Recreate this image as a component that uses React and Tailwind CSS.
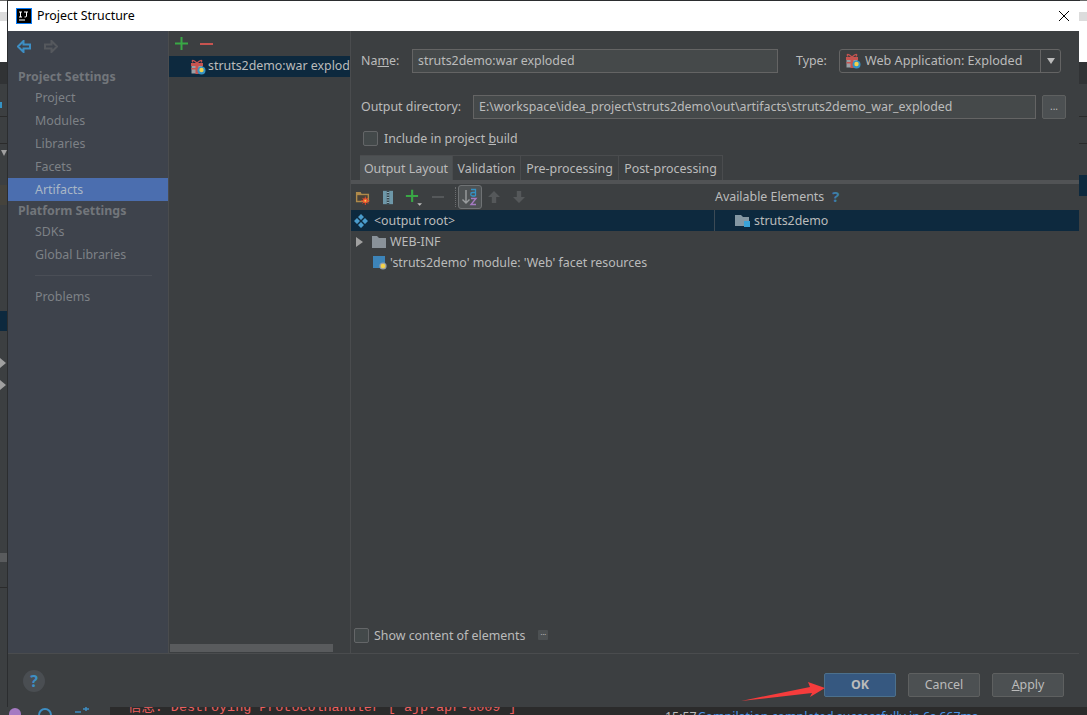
import React from "react"

const ui = { fontFamily: '"Noto Sans", "Open Sans", sans-serif' }

function Gift({ className = "" }) {
  return (
    <svg viewBox="0 0 15 16" className={`w-[15px] h-[16px] shrink-0 ${className}`}>
      <rect x="0.5" y="5" width="11" height="9.5" fill="#9aa0a6" />
      <rect x="0" y="4" width="12" height="3" fill="#c75450" />
      <rect x="4.5" y="4" width="3" height="11" fill="#c75450" />
      <rect x="0.5" y="9" width="11" height="1.5" fill="#c75450" />
      <path d="M6 4 C2 0 0 1 2 3.5 M6 4 C10 0 12 1 10 3.5" stroke="#c75450" strokeWidth="1.2" fill="none" />
      <circle cx="10.5" cy="11.5" r="4" fill="#3592c4" />
      <circle cx="10.5" cy="11" r="2.2" fill="#f4d24b" />
    </svg>
  )
}

function SideHead({ children }) {
  return <div className="h-[19px] pt-[2px] pl-[10px] flex items-center font-bold text-[12.4px] text-[#72767b]">{children}</div>
}

function SideItem({ children, active }) {
  return (
    <div className={`h-[23px] pt-[2px] pl-[27px] flex items-center text-[12.4px] ${active ? "bg-[#4b6eaf] text-[#a9b7c6]" : "text-[#7d8186]"}`}>
      {children}
    </div>
  )
}

function Tab({ children, active, w }) {
  return (
    <div className={`h-[25px] pt-[3px] flex items-center justify-center text-[12.4px] text-[#bbbbbb] border-t border-r border-[#4a4c4e] ${w} ${active ? "bg-[#4e5254]" : ""}`}>
      {children}
    </div>
  )
}

function FootButton({ children, primary }) {
  return (
    <div className={`w-[72px] h-[24px] pt-[2px] flex items-center justify-center text-[12.4px] rounded-[2px] border ${primary ? "bg-[#365880] border-[#4c708c] text-[#bbbbbb] font-bold" : "bg-[#4c5052] border-[#5e6060] text-[#bbbbbb]"}`}>
      {children}
    </div>
  )
}

function Checkbox() {
  return <div className="w-[15px] h-[15px] rounded-[2px] border border-[#646668] bg-[#43494a] shrink-0" />
}

function Toolbar() {
  return (
    <div className="h-[26px] flex items-center pl-[4px] relative">
      {/* new folder */}
      <svg viewBox="0 0 16 16" className="w-[15px] h-[15px]">
        <path d="M1 2h5l1 2h8v9H1z" fill="#b08a4a" />
        <path d="M2.5 5.5h11v6h-11z" fill="#4a4238" />
        <path d="M11 7v9M6.5 11.5h9M8 8.5l6 6M14 8.5l-6 6" stroke="#e8442a" strokeWidth="1" />
        <circle cx="11" cy="11.5" r="2.6" fill="#f0562f" />
        <circle cx="11" cy="11.5" r="1" fill="#f4d24b" />
      </svg>
      {/* archive */}
      <svg viewBox="0 0 12 16" className="w-[10px] h-[15px] ml-[13px]">
        <rect width="12" height="16" fill="#6d97a8" />
        <rect x="4.5" width="3" height="16" fill="#37474f" />
        <path d="M4.5 2h3M4.5 5h3M4.5 8h3M4.5 11h3M4.5 14h3" stroke="#9fc2cf" strokeWidth="1" />
      </svg>
      {/* add */}
      <svg viewBox="0 0 16 16" className="w-[17px] h-[17px] ml-[12px]">
        <path d="M7 1h2.4v5.8H15v2.4H9.4V15H7V9.2H1V6.8h6z" fill="#39a845" transform="scale(.82)" />
        <path d="M11.5 13.5h4.5l-2.2 2.2z" fill="#bbbbbb" />
      </svg>
      <div className="w-[12px] h-[2px] bg-[#55585a] ml-[10px]" />
      <div className="h-[20px] border-l border-dotted border-[#6a6c6e] ml-[11px]" />
      <div className="w-[24px] h-[24px] ml-[2px] rounded-[3px] border border-[#6f7274] bg-[#4e5254] flex items-center justify-center">
        <svg viewBox="0 0 20 20" className="w-[20px] h-[20px]">
          <path d="M6 3v13M2.5 12.5 6 16l3.5-3.5" stroke="#9a9d9f" strokeWidth="1.4" fill="none" />
          <path d="M11 2.5h4.5v6.5M15.5 5.5h-3a1.5 1.5 0 0 0 0 3.5h3" stroke="#3592c4" strokeWidth="1.3" fill="none" />
          <path d="M11 11.5h5L11 17.5h5" stroke="#a57ac2" strokeWidth="1.4" fill="none" />
        </svg>
      </div>
      <svg viewBox="0 0 12 12" className="w-[12px] h-[12px] ml-[6px]">
        <path d="M6 0 12 6H8.2v6H3.8V6H0z" fill="#55585a" />
      </svg>
      <svg viewBox="0 0 12 12" className="w-[12px] h-[12px] ml-[13px]">
        <path d="M6 12 0 6h3.8V0h4.4v6H12z" fill="#55585a" />
      </svg>
      <div className="ml-auto w-[365px] pl-[1px] flex items-center text-[12.4px] text-[#bbbbbb]">
        Available Elements
        <span className="ml-[8px] font-bold text-[15px] leading-none text-[#3d7ea8]">?</span>
      </div>
    </div>
  )
}

export default function App() {
  return (
    <div className="w-[1087px] h-[715px] overflow-hidden relative flex flex-col bg-[#3c3f41]" style={ui}>
      <div className="h-px bg-[#6a6a6a] shrink-0" />
      <div className="flex h-[706px] shrink-0">
        {/* what is behind the dialog, left */}
        <div className="w-[8px] shrink-0 flex flex-col bg-[#3c3f41]">
          <div className="h-[11px] bg-white" />
          <div className="h-[9px] bg-[#dcdcdc]" />
          <div className="h-[41px] bg-white" />
          <div className="h-[22px] bg-[#313335]" />
          <div className="h-[32px] pt-[18px]"><div className="w-[2px] h-[6px] bg-[#3592c4]" /></div>
          <div className="h-[27px] border-t border-[#2b2b2b]" />
          <div className="h-[42px] border-t border-[#2b2b2b] pt-[6px] pl-[1px]">
            <div className="w-0 h-0 border-x-[3px] border-x-transparent border-t-[6px] border-t-[#a0a0a0]" />
          </div>
          <div className="h-[20px] bg-[#45433c]" />
          <div className="h-[106px]" />
          <div className="h-[20px] bg-[#0d293e]" />
          <div className="h-[27px]" />
          <div className="h-0 w-0 border-y-[5px] border-y-transparent border-l-[6px] border-l-[#a0a0a0]" />
          <div className="h-[12px]" />
          <div className="h-0 w-0 border-y-[5px] border-y-transparent border-l-[6px] border-l-[#a0a0a0]" />
          <div className="h-[163px]" />
          <div className="h-[9px] bg-[#595b5d]" />
          <div className="h-[13px]" />
          <div className="h-[10px] flex justify-end"><div className="w-px h-full bg-[#5f9fc9]" /></div>
          <div className="h-[3px] border-b border-[#2b2b2b]" />
        </div>

        {/* dialog */}
        <div className="w-[1071px] shrink-0 flex flex-col bg-[#3c3f41] shadow-[0_0_0_1px_#2b2d2f]">
          <div className="h-[30px] shrink-0 bg-white flex items-center pl-[8px] pr-[10px] text-[12.4px] text-black">
            <svg viewBox="0 0 16 16" className="w-[16px] h-[16px]">
              <rect width="16" height="16" fill="#087cfa" />
              <rect x="1" y="1" width="14" height="14" fill="#000" />
              <rect x="3" y="11.5" width="6" height="1" fill="#fff" />
              <path d="M3 4h3M4.5 4v5M3 9h3M8 4h4M10.5 4v4.5Q10.5 9 8.5 9" stroke="#fff" strokeWidth="1" fill="none" />
            </svg>
            <span className="ml-[5px]">Project Structure</span>
            <svg viewBox="0 0 10 10" className="w-[10px] h-[10px] ml-auto mr-[0px]">
              <path d="M0 0 10 10M10 0 0 10" stroke="#000" strokeWidth="1" />
            </svg>
          </div>

          <div className="flex-1 min-h-0 flex">
            {/* sidebar */}
            <div className="w-[160px] shrink-0 bg-[#3e434c] pt-[5px] border-r-0">
              <div className="h-[20px] pl-[9px] flex items-center gap-[13px]">
                <svg viewBox="0 0 14 13" className="w-[14px] h-[13px]">
                  <path d="M6.5 1 1 6.5 6.5 12V8.6H13V4.4H6.5z" fill="none" stroke="#3d8ec4" strokeWidth="2" />
                </svg>
                <svg viewBox="0 0 14 13" className="w-[14px] h-[13px]">
                  <path d="M7.5 1 13 6.5 7.5 12V8.6H1V4.4h6.5z" fill="none" stroke="#55585d" strokeWidth="2" />
                </svg>
              </div>
              <div className="h-[11px]" />
              <SideHead>Project Settings</SideHead>
              <SideItem>Project</SideItem>
              <SideItem>Modules</SideItem>
              <SideItem>Libraries</SideItem>
              <SideItem>Facets</SideItem>
              <SideItem active>Artifacts</SideItem>
              <SideHead>Platform Settings</SideHead>
              <SideItem>SDKs</SideItem>
              <SideItem>Global Libraries</SideItem>
              <div className="h-[19px] flex items-center pl-[27px] pr-[16px]"><div className="h-px w-full bg-[#4a4e56]" /></div>
              <SideItem>Problems</SideItem>
            </div>

            {/* artifact list */}
            <div className="w-[183px] shrink-0 border-x border-[#4a4c4e] flex flex-col overflow-hidden">
              <div className="h-[25px] shrink-0 flex items-center pl-[6px] gap-[12px]">
                <svg viewBox="0 0 13 13" className="w-[13px] h-[13px]">
                  <path d="M5.5 0h2v5.5H13v2H7.5V13h-2V7.5H0v-2h5.5z" fill="#39a845" />
                </svg>
                <div className="w-[13px] h-[2px] bg-[#c75450]" />
              </div>
              <div className="h-[21px] shrink-0 bg-[#0d293e] flex items-center pl-[22px] text-[12.4px] text-[#bbbbbb] whitespace-nowrap overflow-hidden">
                <Gift />
                <span className="ml-[2px]">struts2demo:war exploded</span>
              </div>
              <div className="flex-1" />
              <div className="h-[8px] w-[163px] ml-[1px] mb-px bg-[#595b5d] shrink-0" />
            </div>

            {/* artifact editor */}
            <div className="flex-1 min-w-0 flex flex-col">
              <div className="h-[64px] shrink-0 flex flex-col pt-[18px] pl-[10px]">
                <div className="flex items-center h-[24px] text-[12.4px] text-[#bbbbbb]">
                  <span className="w-[51px]">Na<span className="underline">m</span>e:</span>
                  <div className="w-[366px] h-[24px] bg-[#45494a] border border-[#646464] pl-[5px] flex items-center">struts2demo:war exploded</div>
                  <span className="ml-[18px] w-[43px]">Type:</span>
                  <div className="w-[222px] h-[24px] bg-[#3c3f41] border border-[#646464] rounded-[3px] flex items-center pl-[6px]">
                    <Gift />
                    <span className="ml-[4px] text-[12.6px]">Web Application: Exploded</span>
                    <div className="ml-auto w-[20px] h-full border-l border-[#646464] flex items-center justify-center">
                      <div className="w-0 h-0 border-x-[4px] border-x-transparent border-t-[6px] border-t-[#bbbbbb]" />
                    </div>
                  </div>
                </div>
              </div>
              <div className="shrink-0 pl-[10px] flex items-center h-[24px] text-[12.4px] text-[#bbbbbb]">
                <span className="w-[112px]">Output directory:</span>
                <div className="w-[563px] h-[24px] bg-[#45494a] border border-[#646464] pl-[5px] flex items-center whitespace-nowrap overflow-hidden">E:\workspace\idea_project\struts2demo\out\artifacts\struts2demo_war_exploded</div>
                <div className="w-[24px] h-[24px] ml-[6px] bg-[#4c5052] border border-[#5e6060] rounded-[2px] flex items-center justify-center text-[10px] leading-none pb-[3px]">...</div>
              </div>
              <div className="shrink-0 h-[36px] pt-[2px] pl-[12px] flex items-center gap-[6px] text-[12.4px] text-[#bbbbbb]">
                <Checkbox />
                <span className="pt-[2px]">Include in project <span className="underline">b</span>uild</span>
              </div>
              <div className="shrink-0 flex pl-[9px]">
                <Tab active w="w-[93px]">Output Layout</Tab>
                <Tab w="w-[68px]">Validation</Tab>
                <Tab w="w-[98px]">Pre-processing</Tab>
                <Tab w="w-[104px]">Post-processing</Tab>
              </div>
              <div className="h-[4px] shrink-0 bg-[#515355]" />
              <Toolbar />
              <div className="h-[21px] shrink-0 bg-[#0d293e] flex text-[12.4px] text-[#bbbbbb]">
                <div className="w-[364px] flex items-center pl-[3px] border-r border-[#3c4a55]">
                  <svg viewBox="0 0 14 14" className="w-[14px] h-[14px]">
                    <path d="M7 0l3 3-3 3-3-3zM3 4l3 3-3 3-3-3zM11 4l3 3-3 3-3-3zM7 8l3 3-3 3-3-3z" fill="#4a9ccc" />
                  </svg>
                  <span className="ml-[6px] pt-[2px]">&lt;output root&gt;</span>
                </div>
                <div className="flex items-center pl-[20px]">
                  <svg viewBox="0 0 15 14" className="w-[15px] h-[14px]">
                    <path d="M0 1h6l2 2h6v9H0z" fill="#8497a3" />
                    <rect x="9" y="7" width="6" height="6" fill="#3aa3d8" />
                  </svg>
                  <span className="ml-[4px] pt-[2px]">struts2demo</span>
                </div>
              </div>
              <div className="h-[21px] shrink-0 flex items-center pl-[5px] text-[12.4px] text-[#bbbbbb]">
                <div className="w-0 h-0 border-y-[5px] border-y-transparent border-l-[7px] border-l-[#a0a0a0]" />
                <svg viewBox="0 0 14 12" className="w-[14px] h-[12px] ml-[9px]">
                  <path d="M0 0h5l2 2h7v10H0z" fill="#8a9299" />
                </svg>
                <span className="ml-[4px] pt-[2px]">WEB-INF</span>
              </div>
              <div className="h-[21px] shrink-0 flex items-center pl-[22px] text-[12.4px] text-[#bbbbbb]">
                <svg viewBox="0 0 14 14" className="w-[14px] h-[14px]">
                  <rect width="12" height="12" fill="#3d84b8" />
                  <circle cx="10" cy="10" r="3.6" fill="#9aa0a6" />
                  <circle cx="10" cy="10" r="2.3" fill="#f4d24b" />
                </svg>
                <span className="ml-[3px] pt-[2px]">'struts2demo' module: 'Web' facet resources</span>
              </div>
              <div className="flex-1" />
              <div className="h-[25px] shrink-0 pl-[3px] flex items-start gap-[5px] text-[12.4px] text-[#bbbbbb]">
                <Checkbox />
                <span className="leading-[15px]">Show content of elements</span>
                <div className="w-[10px] h-[10px] mt-[2px] ml-[8px] bg-[#4c5052] rounded-[1px] text-[7px] leading-[6px] text-center">...</div>
              </div>
            </div>
          </div>

          {/* footer */}
          <div className="h-[54px] shrink-0 border-t border-[#4a4c4e] flex items-center pl-[14px] pr-[15px]">
            <div className="w-[22px] h-[22px] ml-[1px] rounded-full bg-[#4a4e52] flex items-center justify-center font-bold text-[16px] leading-none text-[#3d8ec4]">?</div>
            <div className="ml-auto mt-[8px] flex gap-[12px]">
              <FootButton primary>OK</FootButton>
              <FootButton>Cancel</FootButton>
              <FootButton><span><span className="underline">A</span>pply</span></FootButton>
            </div>
          </div>
        </div>

        {/* what is behind the dialog, right */}
        <div className="w-[8px] shrink-0 flex flex-col bg-[#3c3f41]">
          <div className="h-[11px] bg-white" />
          <div className="h-[9px] bg-[#dcdcdc]" />
          <div className="h-[41px] bg-white" />
          <div className="h-[22px] bg-[#313335]" />
          <div className="h-[32px]" />
          <div className="h-[27px] border-t border-[#2b2b2b]" />
          <div className="h-[32px] border-t border-[#2b2b2b]" />
          <div className="h-[21px] bg-[#0d293e]" />
        </div>
      </div>

      {/* bottom edge of the IDE under the dialog */}
      <div className="h-[8px] shrink-0 flex overflow-hidden bg-[#2b2b2b]">
        <div className="w-[110px] shrink-0 bg-[#3c3f41] flex items-start">
          <svg viewBox="0 0 12 8" className="w-[12px] h-[8px] ml-[9px]"><circle cx="6" cy="7" r="6" fill="#a57ac2" /></svg>
          <svg viewBox="0 0 16 8" className="w-[16px] h-[8px] ml-[16px]"><circle cx="8" cy="8" r="6" fill="none" stroke="#3d8ec4" strokeWidth="2" /></svg>
          <svg viewBox="0 0 16 8" className="w-[16px] h-[8px] ml-[21px]"><path d="M1 5h6M9 2h6M12 0v4" stroke="#3d8ec4" strokeWidth="1.5" fill="none" /></svg>
        </div>
        <div className="w-[552px] shrink-0 pl-[18px] text-[13.4px] leading-[14px] -mt-[6px] text-[#ee5f5f] whitespace-nowrap" style={{ fontFamily: '"Liberation Mono", "Noto Sans CJK SC", monospace' }}>
          信息: Destroying ProtocolHandler ["ajp-apr-8009"]
        </div>
        <div className="pl-[3px] text-[12.4px] leading-[14px] mt-[3px] whitespace-nowrap text-[#4a93e6]">
          <span className="text-[#bbbbbb] mr-[1px]">15:57</span>Compilation completed successfully in 6s 667ms
        </div>
      </div>

      {/* red arrow drawn over the screenshot */}
      <svg viewBox="0 0 90 24" className="absolute left-[738px] top-[677px] w-[90px] h-[24px]">
        <path d="M3 24 L72 10 L70 5 L87 11 L72 20 L74 16 Z" fill="#f63c3c" />
      </svg>
    </div>
  )
}
